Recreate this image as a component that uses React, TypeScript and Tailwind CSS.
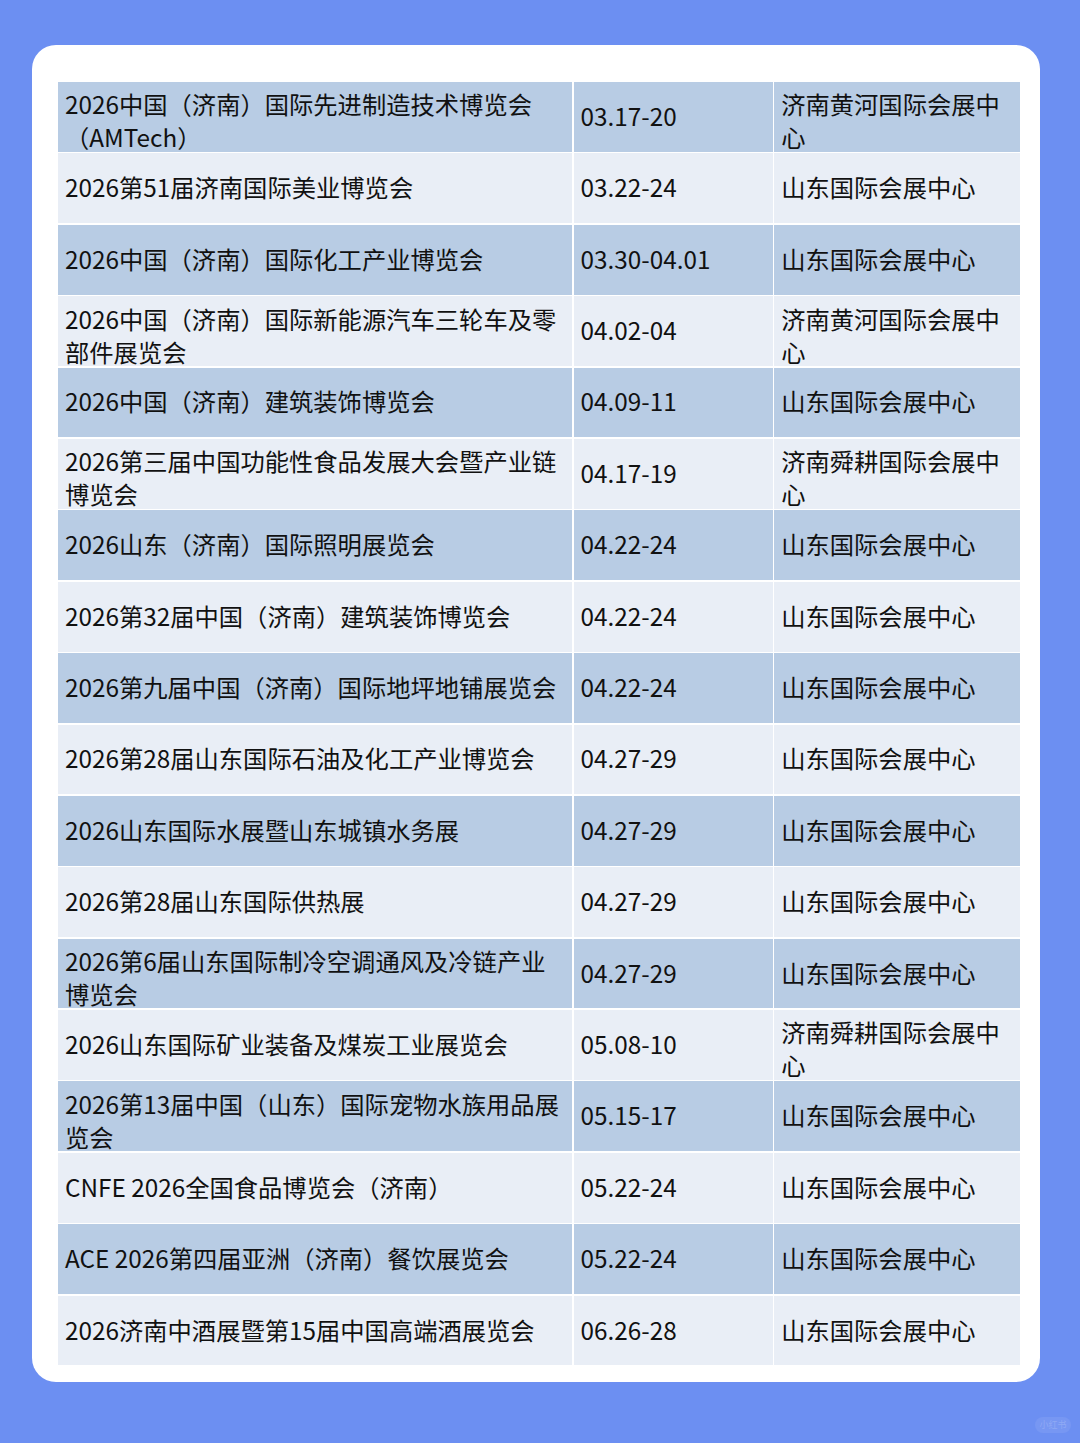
const rows: { name: string[]; date: string; venue: string[] }[] = [
  { name: ["2026中国（济南）国际先进制造技术博览会", "（AMTech）"], date: "03.17-20", venue: ["济南黄河国际会展中", "心"] },
  { name: ["2026第51届济南国际美业博览会"], date: "03.22-24", venue: ["山东国际会展中心"] },
  { name: ["2026中国（济南）国际化工产业博览会"], date: "03.30-04.01", venue: ["山东国际会展中心"] },
  { name: ["2026中国（济南）国际新能源汽车三轮车及零", "部件展览会"], date: "04.02-04", venue: ["济南黄河国际会展中", "心"] },
  { name: ["2026中国（济南）建筑装饰博览会"], date: "04.09-11", venue: ["山东国际会展中心"] },
  { name: ["2026第三届中国功能性食品发展大会暨产业链", "博览会"], date: "04.17-19", venue: ["济南舜耕国际会展中", "心"] },
  { name: ["2026山东（济南）国际照明展览会"], date: "04.22-24", venue: ["山东国际会展中心"] },
  { name: ["2026第32届中国（济南）建筑装饰博览会"], date: "04.22-24", venue: ["山东国际会展中心"] },
  { name: ["2026第九届中国（济南）国际地坪地铺展览会"], date: "04.22-24", venue: ["山东国际会展中心"] },
  { name: ["2026第28届山东国际石油及化工产业博览会"], date: "04.27-29", venue: ["山东国际会展中心"] },
  { name: ["2026山东国际水展暨山东城镇水务展"], date: "04.27-29", venue: ["山东国际会展中心"] },
  { name: ["2026第28届山东国际供热展"], date: "04.27-29", venue: ["山东国际会展中心"] },
  { name: ["2026第6届山东国际制冷空调通风及冷链产业", "博览会"], date: "04.27-29", venue: ["山东国际会展中心"] },
  { name: ["2026山东国际矿业装备及煤炭工业展览会"], date: "05.08-10", venue: ["济南舜耕国际会展中", "心"] },
  { name: ["2026第13届中国（山东）国际宠物水族用品展", "览会"], date: "05.15-17", venue: ["山东国际会展中心"] },
  { name: ["CNFE 2026全国食品博览会（济南）"], date: "05.22-24", venue: ["山东国际会展中心"] },
  { name: ["ACE 2026第四届亚洲（济南）餐饮展览会"], date: "05.22-24", venue: ["山东国际会展中心"] },
  { name: ["2026济南中酒展暨第15届中国高端酒展览会"], date: "06.26-28", venue: ["山东国际会展中心"] },
]

function Lines({ lines }: { lines: string[] }) {
  return (
    <div className={lines.length > 1 ? "pt-[10px]" : ""}>
      {lines.map((l, i) => (
        <div key={i} className="whitespace-nowrap">
          {l}
        </div>
      ))}
    </div>
  )
}

export default function App() {
  return (
    <div
      className="min-h-[1443px] w-[1080px] bg-[#6c8ff2] pt-[45px] pl-[32px] flex flex-col"
      style={{ fontFamily: '"Noto Sans CJK SC", "Noto Sans", sans-serif' }}
    >
      <div className="w-[1008px] h-[1337px] bg-white rounded-[24px] pl-[26px] pr-[20px] pt-[37px]">
        <div className="flex flex-col gap-[1.6px] bg-white text-[24.3px] leading-[33px] text-[#111111]">
          {rows.map((r, i) => {
            const bg = i % 2 === 0 ? "bg-[#b8cce4]" : "bg-[#e9eef6]"
            return (
              <div key={i} className="flex h-[69.8px] gap-[1.6px]">
                <div className={`w-[514px] ${bg} flex items-center pl-[7px] pb-[3px]`}>
                  <Lines lines={r.name} />
                </div>
                <div className={`w-[199px] ${bg} flex items-center pl-[7px] pb-[3px]`}>{r.date}</div>
                <div className={`flex-1 ${bg} flex items-center pl-[7px] pb-[3px]`}>
                  <Lines lines={r.venue} />
                </div>
              </div>
            )
          })}
        </div>
      </div>
      <div className="flex justify-end pr-[9px] pt-[35px]">
        <div className="w-[36px] h-[16px] rounded-full bg-[#7797f3] text-[9px] leading-[16px] text-[#8fa9f5] text-center">
          小红书
        </div>
      </div>
    </div>
  )
}
